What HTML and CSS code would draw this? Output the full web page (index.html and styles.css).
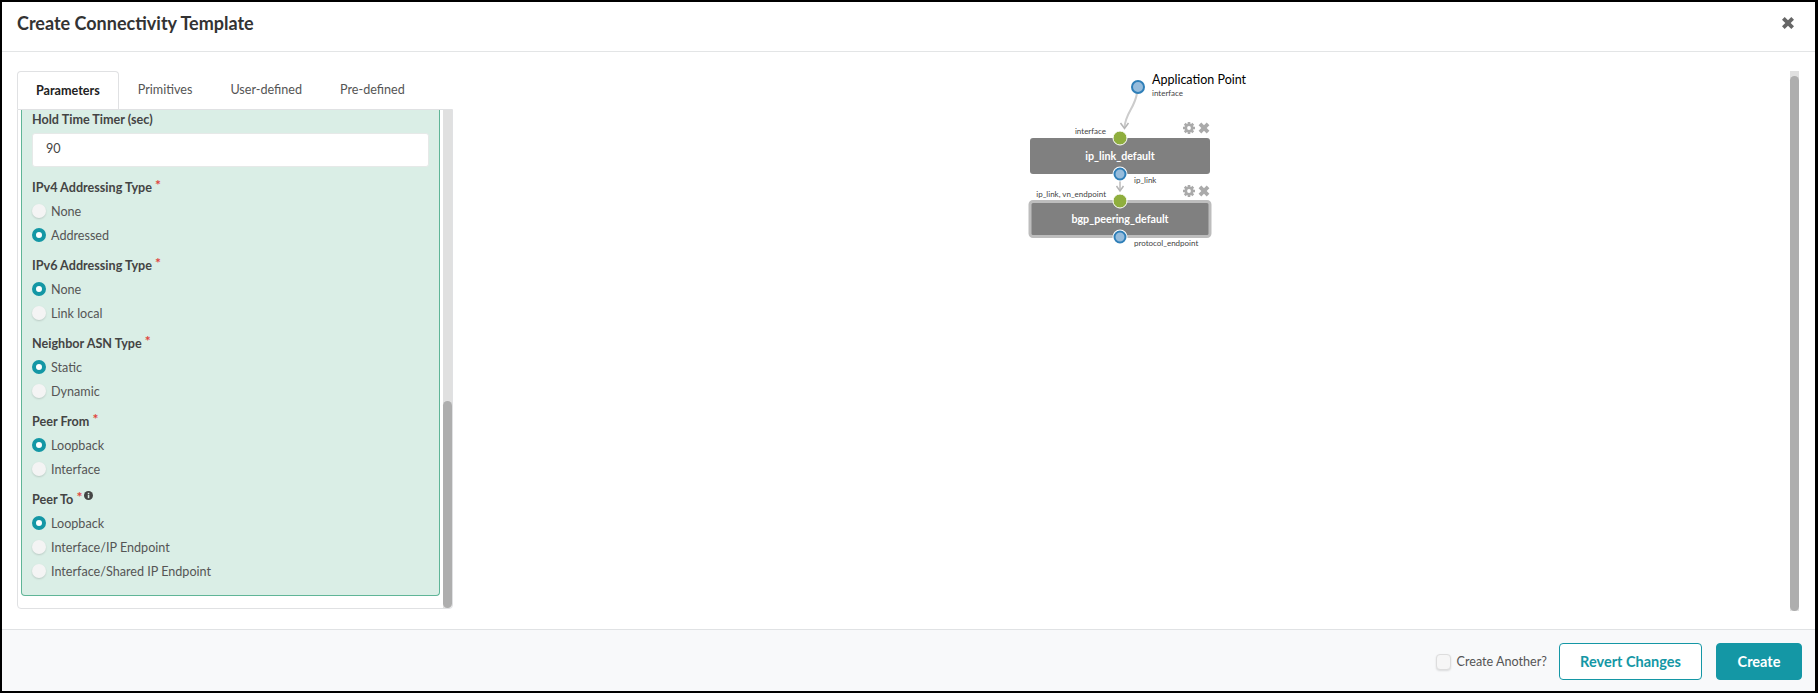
FILE: index.html
```html
<!DOCTYPE html>
<html lang="en">
<head>
    <meta charset="UTF-8">
    <title>Create Connectivity Template</title>
    <link rel="stylesheet" href="styles.css">
</head>
<body>
<div class="modal">
    <div class="modal-header">
        <h1>Create Connectivity Template</h1>
        <svg class="close" viewBox="0 0 12 12" width="16" height="16"><path d="M1.500 3.500 3.500 1.500 6 4 8.500 1.500 10.500 3.500 8 6 10.500 8.500 8.500 10.500 6 8 3.500 10.500 1.500 8.500 4 6Z"/></svg>
    </div>

    <div class="modal-body">
        <div class="left">
            <div class="tabs">
                <div class="tab active">Parameters</div>
                <div class="tab">Primitives</div>
                <div class="tab">User-defined</div>
                <div class="tab">Pre-defined</div>
            </div>
            <div class="panel">
                <div class="panel-scroll">
                    <div class="card">
                        <label class="title first">Hold Time Timer (sec)</label>
                        <div class="input">90</div>

                        <label class="title">IPv4 Addressing Type <sup>*</sup></label>
                        <div class="radio"><i></i>None</div>
                        <div class="radio"><i class="on"></i>Addressed</div>

                        <label class="title">IPv6 Addressing Type <sup>*</sup></label>
                        <div class="radio"><i class="on"></i>None</div>
                        <div class="radio"><i></i>Link local</div>

                        <label class="title">Neighbor ASN Type <sup>*</sup></label>
                        <div class="radio"><i class="on"></i>Static</div>
                        <div class="radio"><i></i>Dynamic</div>

                        <label class="title">Peer From <sup>*</sup></label>
                        <div class="radio"><i class="on"></i>Loopback</div>
                        <div class="radio"><i></i>Interface</div>

                        <label class="title">Peer To <sup>*</sup><svg class="info" viewBox="0 0 10 10" width="9" height="9"><circle cx="5" cy="5" r="5" fill="#444"/><rect x="4.200" y="4.200" width="1.700" height="3.800" fill="#daeee6"/><rect x="4.200" y="2" width="1.700" height="1.500" fill="#daeee6"/></svg></label>
                        <div class="radio"><i class="on"></i>Loopback</div>
                        <div class="radio"><i></i>Interface/IP Endpoint</div>
                        <div class="radio"><i></i>Interface/Shared IP Endpoint</div>
                    </div>
                </div>
                <div class="scrollbar"><div class="thumb"></div></div>
            </div>
        </div>

        <div class="canvas">
            <svg class="diagram" width="300" height="190" viewBox="1000 60 300 190">
                <defs>
                    <g id="gear">
                        <path d="M-1.300-6H1.300V6H-1.300ZM-6-1.300H6V1.300H-6Z" fill="#aaa"/>
                        <path d="M-1.300-6H1.300V6H-1.300ZM-6-1.300H6V1.300H-6Z" fill="#aaa" transform="rotate(45)"/>
                        <circle r="4.500" fill="#aaa"/>
                        <circle r="1.900" fill="#fff"/>
                    </g>
                    <path id="cross" d="M-4-2-2-4 0-2 2-4 4-2 2 0 4 2 2 4 0 2-2 4-4 2-2 0Z" fill="#aaa" transform="scale(1.350)"/>
                </defs>

                <path d="M1137 93C1135 108 1125 113 1124.500 128" fill="none" stroke="#ccc" stroke-width="2"/>
                <path d="M1120.500 123 1124.500 128.500 1128.500 123" fill="none" stroke="#b5b5b5" stroke-width="1.500"/>
                <path d="M1120 181V190" fill="none" stroke="#ccc" stroke-width="2"/>
                <path d="M1116.500 186 1120 191 1123.500 186" fill="none" stroke="#b5b5b5" stroke-width="1.500"/>

                <rect x="1030" y="138" width="180" height="36" rx="3" fill="#808080"/>
                <rect x="1030" y="201.500" width="180" height="35" rx="3" fill="#808080" stroke="#bdbdbd" stroke-width="3"/>

                <text class="node-name" x="1120" y="160">ip_link_default</text>
                <text class="node-name" x="1120" y="223">bgp_peering_default</text>

                <circle class="port-out" cx="1138" cy="87" r="6"/>
                <circle class="port-in" cx="1120" cy="138" r="7"/>
                <circle class="halo" cx="1120" cy="174" r="7.500"/>
                <circle class="port-out" cx="1120" cy="174" r="5.500"/>
                <circle class="port-in" cx="1120" cy="201" r="7"/>
                <circle class="halo" cx="1120" cy="237" r="7.500"/>
                <circle class="port-out" cx="1120" cy="237" r="5.500"/>

                <text class="app" x="1152" y="84">Application Point</text>
                <text class="small" x="1152" y="96">interface</text>
                <text class="small end" x="1106" y="134">interface</text>
                <text class="small" x="1134" y="183">ip_link</text>
                <text class="small end" x="1106" y="197">ip_link, vn_endpoint</text>
                <text class="small" x="1134" y="246">protocol_endpoint</text>

                <use href="#gear" x="1189" y="128"/>
                <use href="#cross" x="1204" y="128"/>
                <use href="#gear" x="1189" y="191"/>
                <use href="#cross" x="1204" y="191"/>
            </svg>
            <div class="scrollbar page-scroll"><div class="thumb"></div></div>
        </div>
    </div>

    <div class="modal-footer">
        <span class="check"></span>
        <span class="check-label">Create Another?</span>
        <button class="btn btn-outline">Revert Changes</button>
        <button class="btn btn-primary">Create</button>
    </div>
</div>
</body>
</html>
```

FILE: styles.css
```css
* {
    box-sizing: border-box;
}

body {
    margin: 0;
    font-family: Lato, "Open Sans", sans-serif;
    color: #444;
    background: #fff;
}

.modal {
    width: 1818px;
    height: 693px;
    border: 2px solid #000;
    border-right-width: 3px;
    display: flex;
    flex-direction: column;
    overflow: hidden;
}

.modal-header {
    height: 50px;
    flex: none;
    padding: 0 19px 7px 15px;
    display: flex;
    align-items: center;
    justify-content: space-between;
    border-bottom: 1px solid #e3e5e6;
}

.modal-header h1 {
    margin: 0;
    font-size: 18px;
    font-weight: 700;
    color: #333;
}

.close {
    fill: #666;
}

.modal-body {
    flex: 1;
    min-height: 0;
    display: flex;
    padding: 19px 16px 0 15px;
}

.left {
    width: 436px;
    flex: none;
    height: 538px;
    display: flex;
    flex-direction: column;
}

.tabs {
    height: 38px;
    flex: none;
    display: flex;
    font-size: 12.600px;
    color: #555;
}

.tab {
    padding: 0 19px;
    line-height: 37px;
    white-space: nowrap;
}

.tab.active {
    height: 38px;
    background: #fff;
    color: #222;
    font-weight: 700;
    border: 1px solid #e0e1e3;
    border-bottom: none;
    border-radius: 4px 4px 0 0;
    padding: 0 18px;
    position: relative;
    z-index: 1;
}

.panel {
    flex: 1;
    min-height: 0;
    display: flex;
    border: 1px solid #e0e1e3;
    border-radius: 0 0 4px 4px;
    overflow: hidden;
}

.panel-scroll {
    flex: 1;
    padding: 0 3px;
    min-width: 0;
}

.card {
    height: 486px;
    background: #daeee6;
    border: 1px solid #5fb597;
    border-top: none;
    border-radius: 0 0 4px 4px;
    padding: 0 10px;
    font-size: 12.600px;
}

.title {
    display: block;
    margin: 8px 0 0;
    height: 22px;
    line-height: 22px;
    font-weight: 700;
    color: #444;
}

.title.first {
    margin: 0;
    height: 20px;
    line-height: 20px;
}

.title sup {
    color: #e0443c;
    font-size: 14px;
    line-height: 0;
    vertical-align: 2px;
}

.info {
    margin-left: 2px;
    vertical-align: 4px;
}

.input {
    height: 34px;
    margin-top: 3px;
    padding: 0 13px;
    line-height: 30px;
    background: #fff;
    border: 1px solid #e6e9e8;
    border-radius: 3px;
    color: #444;
}

.input + .title {
    margin-top: 10px;
}

.radio {
    height: 24px;
    display: flex;
    align-items: center;
    gap: 5px;
    color: #555;
}

.radio i {
    width: 14px;
    height: 14px;
    border-radius: 50%;
    background: #f4f4f4;
    box-shadow: 0 1px 2px rgba(0, 0, 0, 0.15);
}

.radio i.on {
    background: #fff;
    border: 4px solid #1497a5;
    box-shadow: none;
}

.scrollbar {
    width: 9px;
    flex: none;
    background: #e0e0e0;
    position: relative;
}

.thumb {
    position: absolute;
    left: 0;
    right: 0;
    top: 291px;
    bottom: 0;
    background: #aeaeae;
    border-radius: 5px;
}

.canvas {
    flex: 1;
    position: relative;
}

.diagram {
    position: absolute;
    left: 547px;
    top: -11px;
}

.page-scroll {
    position: absolute;
    right: 0;
    top: 0;
    height: 540px;
}

.page-scroll .thumb {
    top: 5px;
}

.node-name {
    fill: #fff;
    font-size: 10.700px;
    font-weight: 700;
    text-anchor: middle;
}

.halo {
    fill: #fff;
}

.port-out {
    fill: #96bcdc;
    stroke: #2f7fb8;
    stroke-width: 2;
}

.port-in {
    fill: #8fae3e;
    stroke: #fff;
    stroke-width: 1;
}

.app {
    font-size: 12.500px;
    fill: #000;
}

.small {
    font-size: 8px;
    fill: #444;
}

.small.end {
    text-anchor: end;
}

.modal-footer {
    height: 62px;
    flex: none;
    background: #f8f9fa;
    border-top: 1px solid #e0e2e4;
    padding: 13px 13px 0 0;
    display: flex;
    justify-content: flex-end;
    align-items: flex-start;
    font-size: 12.600px;
}

.check {
    width: 15px;
    height: 16px;
    margin-top: 11px;
    background: #f6f6f6;
    border: 1px solid #ddd;
    border-radius: 4px;
    box-shadow: 0 1px 2px rgba(0, 0, 0, 0.12);
}

.check-label {
    margin: 0 12px 0 6px;
    line-height: 37px;
    color: #555;
}

.btn {
    height: 37px;
    font-family: inherit;
    font-size: 14.500px;
    font-weight: 700;
    border-radius: 4px;
    border: 1px solid #1497a5;
}

.btn-outline {
    width: 143px;
    background: #fff;
    color: #1497a5;
    margin-right: 14px;
}

.btn-primary {
    width: 86px;
    background: #1497a5;
    color: #fff;
}
```
